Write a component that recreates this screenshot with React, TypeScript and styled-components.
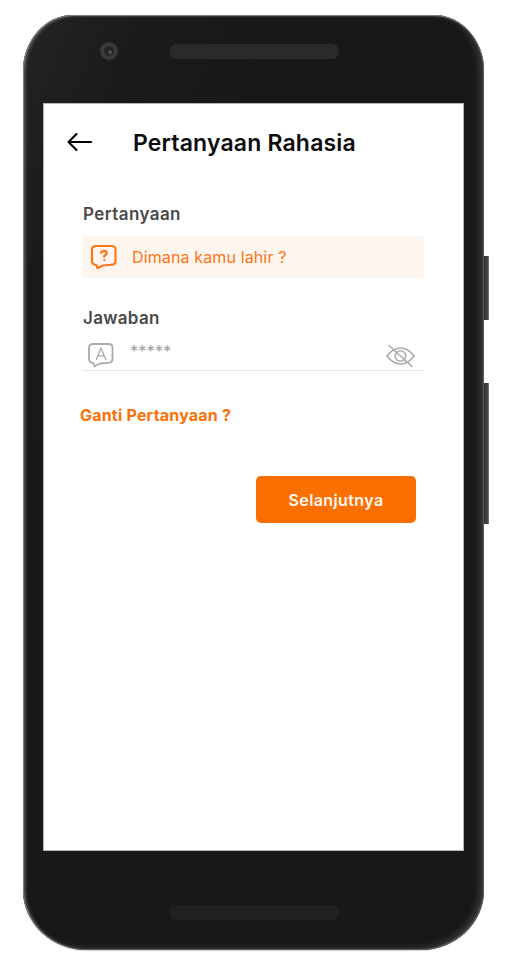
import React from "react";
import styled, { createGlobalStyle } from "styled-components";

const GlobalStyle = createGlobalStyle`
  *, *::before, *::after { box-sizing: border-box; }
  body { margin: 0; background: #fff; font-family: Inter, "Liberation Sans", sans-serif; }
`;

const Stage = styled.div`
  display: flex;
  width: 512px;
  height: 961px;
  padding: 15px 0 0 23px;
  overflow: hidden;
`;

const Phone = styled.div`
  display: flex;
  flex-direction: column;
  align-items: center;
  width: 461px;
  height: 935px;
  border-radius: 50px 50px 64px 64px / 56px 56px 60px 60px;
  background: linear-gradient(115deg, #242424 0%, #1a1a1a 15%, #181818 30%);
  box-shadow:
    inset 1px 0 1px #858785,
    inset 0 1px 1px #858785,
    inset -1px -1px 1px #5c5c58,
    inset 3px 1px 3px #484b48,
    inset -5px -2px 6px #383732,
    0 1px 1px #d5d3d0;
`;

const SideButtons = styled.div`
  display: flex;
  flex-direction: column;
  gap: 63px;
  padding-top: 241px;
`;

const SideButton = styled.div<{ $length: number }>`
  width: 5px;
  height: ${(p) => p.$length}px;
  background: linear-gradient(90deg, #333130, #444144 65%, #7c797c);
`;

const TopBezel = styled.div`
  display: flex;
  width: 100%;
  height: 88px;
  flex: none;
  align-items: flex-start;
  padding: 27px 0 0 77px;
  gap: 51px;
`;

const Camera = styled.div`
  width: 18px;
  height: 18px;
  border-radius: 50%;
  border: 4px solid #3a3a3a;
  background: radial-gradient(circle at 60% 62%, #66525a 0 10%, #232129 30%, #28262a 60%, #303030 100%);
`;

const Speaker = styled.div<{ $dim?: boolean }>`
  width: 170px;
  height: 15px;
  margin-top: ${(p) => (p.$dim ? 54 : 2)}px;
  border-radius: 8px;
  background:
    repeating-linear-gradient(90deg, rgba(0, 0, 0, 0.07) 0 1px, transparent 1px 4px),
    ${(p) => (p.$dim ? "#212121" : "#2b2b2b")};
`;

const BottomBezel = styled.div`
  width: 100%;
  padding-left: 146px;
`;

const Screen = styled.main`
  display: flex;
  flex-direction: column;
  align-self: flex-start;
  width: 421px;
  height: 748px;
  flex: none;
  margin-left: 20px;
  background: #fff;
  border: 1px solid #b5b5b5;
`;

const Header = styled.header`
  display: flex;
  align-items: center;
  height: 78px;
  padding-left: 23px;
  gap: 41px;
`;

const Title = styled.h1`
  margin: 0;
  font-size: 23px;
  font-weight: 600;
  line-height: 28px;
  letter-spacing: 0.17px;
  color: #0c0c0c;
  white-space: nowrap;
`;

const Form = styled.form`
  display: flex;
  flex-direction: column;
  padding: 20px 39px 0 38px;
`;

const Label = styled.label<{ $spacing: number }>`
  height: 34px;
  padding-left: 1px;
  font-size: 17px;
  font-weight: 600;
  line-height: 24px;
  letter-spacing: ${(p) => p.$spacing}px;
  color: #494949;
`;

const Question = styled.div`
  display: flex;
  align-items: center;
  height: 42px;
  margin-bottom: 28px;
  padding-left: 8px;
  gap: 15px;
  background: #fff5ef;
  color: #fa7514;
  font-size: 16px;
  letter-spacing: 0.13px;
`;

const Answer = styled.div`
  display: flex;
  height: 31px;
  margin-bottom: 32px;
  padding: 2px 9px 0 5px;
  border-bottom: 1px solid #e6e6e6;
`;

const Mask = styled.span`
  flex: 1;
  padding-left: 16px;
  font-size: 16px;
  line-height: 18px;
  letter-spacing: 0.3px;
  color: #a0a0a0;
`;

const ChangeLink = styled.a`
  margin-left: -2px;
  height: 24px;
  font-size: 16px;
  font-weight: 700;
  line-height: 24px;
  letter-spacing: 0.2px;
  color: #fb7108;
`;

const Submit = styled.button`
  align-self: flex-end;
  width: 160px;
  height: 47px;
  margin: 48.5px 8px 0 0;
  padding: 2px 0 0;
  border: 0;
  border-radius: 5px;
  background: #fb6f02;
  color: #fff8f2;
  font: 600 16px Inter, sans-serif;
  letter-spacing: 0.4px;
`;

const Icon = styled.svg`
  flex: none;
  fill: none;
  stroke: currentColor;
  stroke-linecap: round;
  stroke-linejoin: round;
`;

const GreyIcon = styled(Icon)`
  color: #ababab;
`;

const bubble = "M6 2H21.5Q25.5 2 25.5 5.5V17Q25.5 20.6 21.5 20.8L13 21.5L7.5 24.2L6.5 21.2Q2 20.5 2 17V5.5Q2 2 6 2Z";

export default function App() {
  return (
    <>
      <GlobalStyle />
      <Stage>
        <Phone>
          <TopBezel>
            <Camera />
            <Speaker />
          </TopBezel>
          <Screen>
            <Header>
              <Icon width="25" height="20" viewBox="0 0 25 20" strokeWidth="2.1">
                <path d="M9.5 1L1.5 9L9.5 17M1.5 9H24" />
              </Icon>
              <Title>Pertanyaan Rahasia</Title>
            </Header>
            <Form>
              <Label $spacing={0.42}>Pertanyaan</Label>
              <Question>
                <Icon width="27" height="26" viewBox="0 0 27 26" strokeWidth="2.1">
                  <path d={bubble} />
                  <path d="M11 8.8Q11.4 6.9 14 6.9Q16.8 7 16.8 9.2Q16.8 10.6 14.3 11.8V13M14.3 16V16.2" />
                </Icon>
                <span>Dimana kamu lahir ?</span>
              </Question>
              <Label $spacing={0.3}>Jawaban</Label>
              <Answer>
                <GreyIcon width="27" height="26" viewBox="0 0 27 26" strokeWidth="1.8">
                  <path d={bubble} />
                  <path d="M9.3 17.5L14 6L18.7 17.5M11 13.8H17" strokeWidth="1.3" />
                </GreyIcon>
                <Mask>*****</Mask>
                <GreyIcon width="29" height="26" viewBox="0 0 29 26" strokeWidth="1.6">
                  <path d="M1 14Q7 6 14.5 6T28 14Q22 22 14.5 22T1 14Z" />
                  <circle cx="14.5" cy="14" r="5.3" />
                  <path d="M3 3.5L26 24.5" />
                </GreyIcon>
              </Answer>
              <ChangeLink>Ganti Pertanyaan ?</ChangeLink>
              <Submit type="button">Selanjutnya</Submit>
            </Form>
          </Screen>
          <BottomBezel>
            <Speaker $dim />
          </BottomBezel>
        </Phone>
        <SideButtons>
          <SideButton $length={64} />
          <SideButton $length={141} />
        </SideButtons>
      </Stage>
    </>
  );
}
